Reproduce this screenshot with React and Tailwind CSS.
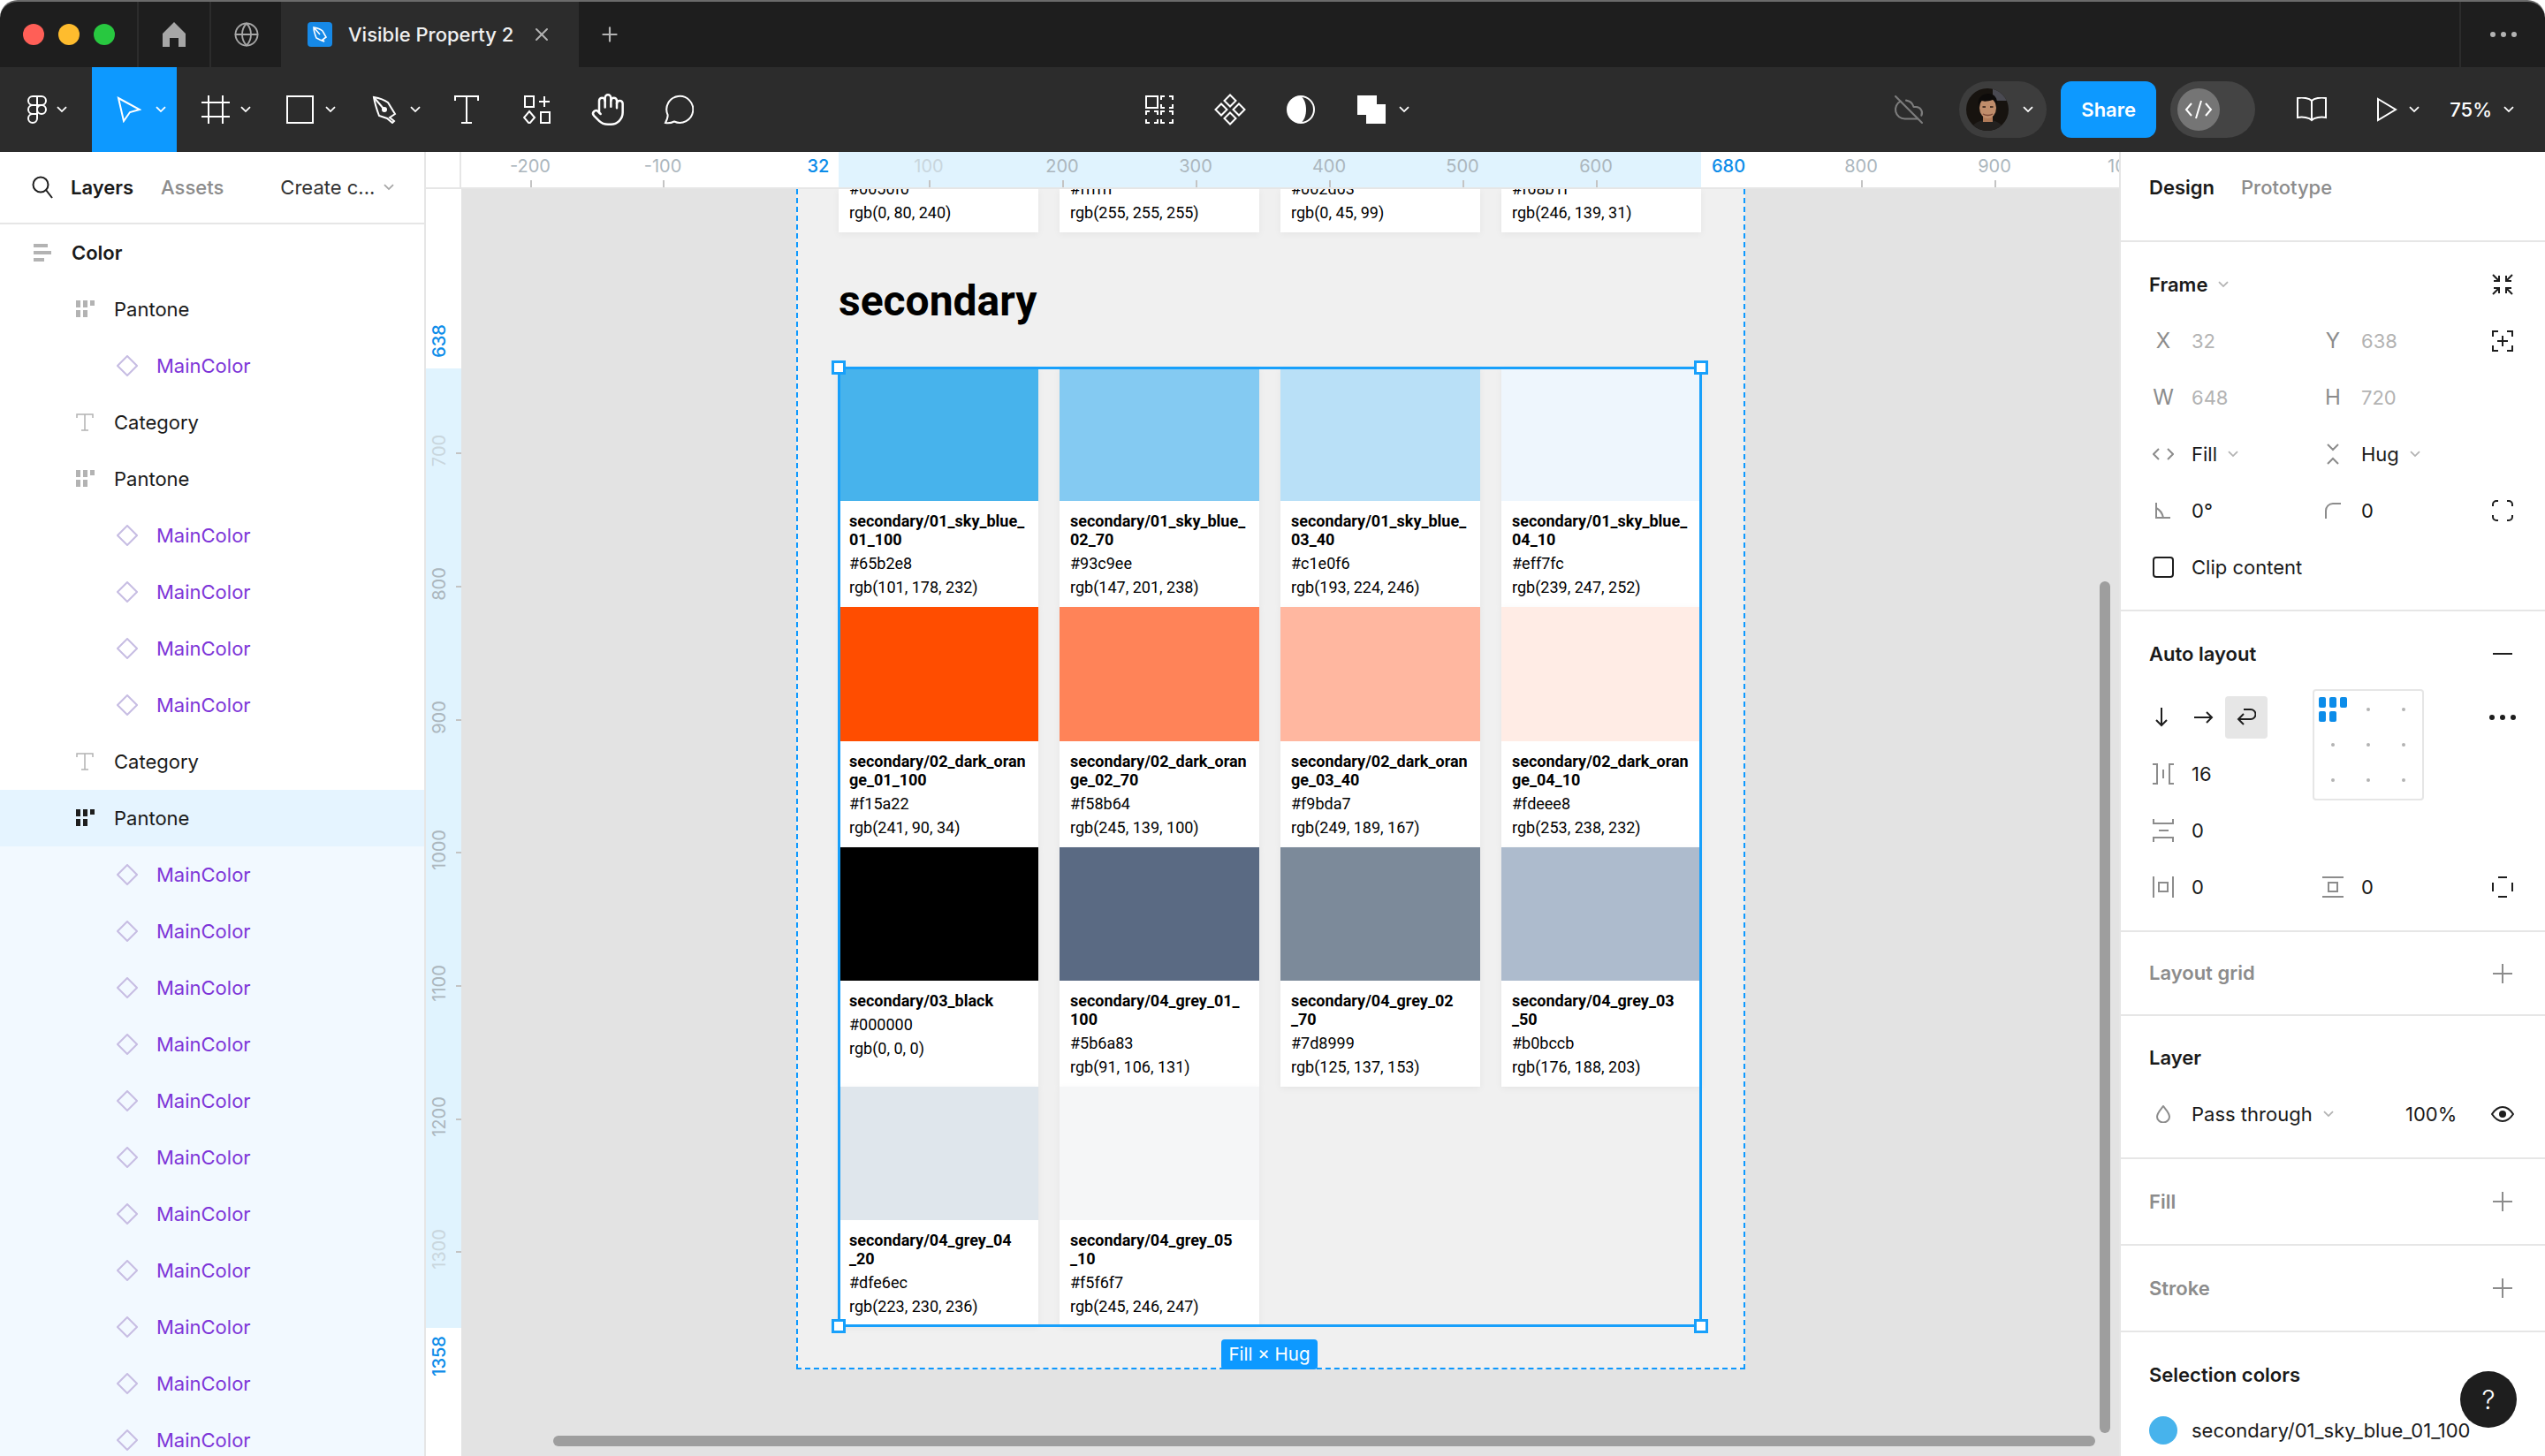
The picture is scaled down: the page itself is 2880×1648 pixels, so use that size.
import React from "react";
import { X, Plus, Globe, Hand, CloudOff } from "lucide-react";

const Chev = ({ c = "#ffffff", w = 12 }) => (
  <svg width={w} height={w * 0.6} viewBox="0 0 12 7" fill="none" stroke={c} strokeWidth="1.8"><path d="M1 1l5 5 5-5" /></svg>
);
const S = ({ w, h, vb, children, ...r }) => (
  <svg width={w} height={h} viewBox={vb || `0 0 ${w} ${h}`} fill="none" stroke="currentColor" strokeWidth="2" {...r}>{children}</svg>
);

const FigmaIcon = () => (
  <S w={24} h={32} className="text-white">
    <path d="M12 1H7a5 5 0 0 0 0 10h5zM12 1h5a5 5 0 0 1 0 10h-5zM12 11H7a5 5 0 0 0 0 10h5zM7 21h5v5a5 5 0 1 1-5-5z" />
    <circle cx="17" cy="16" r="5" />
  </S>
);
const MoveIcon = () => <S w={28} h={30} className="text-white"><path d="M2 2L26 15 15 18 8 28z" /></S>;
const FrameIcon = () => <S w={32} h={32} className="text-white"><path d="M8 0v32M24 0v32M0 8h32M0 24h32" /></S>;
const RectIcon = () => <S w={32} h={32} className="text-white"><rect x="1" y="1" width="29" height="30" /></S>;
const PenIcon = () => (
  <S w={30} h={32} className="text-white">
    <path d="M2 2C8 3 14 5 18 8L26 21 20 25 25 29 23 31 17 26 8 23C5 15 3 8 2 2z" />
    <path d="M2 2L13 15" /><circle cx="14" cy="16" r="2" fill="currentColor" />
  </S>
);
const TextIcon = () => <S w={28} h={32} className="text-white"><path d="M1 6V1h26v5M14 1v30M8 31h12" /></S>;
const ResIcon = () => (
  <S w={32} h={32} className="text-white">
    <rect x="2" y="1" width="10" height="12" /><path d="M24 1v12M18 7h12" /><path d="M7 18l6 7-6 7-6-7z" /><rect x="20" y="19" width="10" height="12" />
  </S>
);
const CommentIcon = () => <S w={34} h={34} className="text-white"><path d="M2 32C4 28 5 26 4.6 23A15 15 0 1 1 12 30.5C9 32 5 32.5 2 32z" /></S>;
const DashSquare = ({ x, y }) => (
  <path d={`M${x} ${y + 4}V${y}h4M${x + 9} ${y}h4v4M${x} ${y + 9}v4h4M${x + 9} ${y + 13}h4v-4`} />
);
const CompIcon = () => (
  <S w={32} h={32} className="text-white">
    <rect x="1" y="1" width="13" height="13" />
    <DashSquare x={18} y={1} />
    <DashSquare x={1} y={18} />
    <DashSquare x={18} y={18} />
  </S>
);
const DiamondsIcon = () => (
  <S w={36} h={36} className="text-white">
    <path d="M18 1.5l6.5 6.5-6.5 6.5-6.5-6.5zM18 21.5l6.5 6.5-6.5 6.5-6.5-6.5zM8 11.5l6.5 6.5-6.5 6.5L1.5 18zM28 11.5l6.5 6.5-6.5 6.5-6.5-6.5z" />
  </S>
);
const MaskIcon = () => (
  <S w={32} h={32} className="text-white">
    <ellipse cx="16" cy="16" rx="15" ry="15" />
    <path d="M16 1A15 15 0 0 0 16 31C24 26 24 6 16 1z" fill="currentColor" stroke="none" />
  </S>
);
const BoolIcon = () => <svg width="32" height="32" viewBox="0 0 32 32" fill="#fff"><path d="M0 0h22v10h10v22H10V22H0z" /></svg>;
const BookIcon = () => <S w={34} h={28} className="text-white"><path d="M17 4C14 1 7 0 1 1V23C7 22 14 23 17 26 20 23 27 22 33 23V1C27 0 20 1 17 4zM17 4V26" /></S>;
const PlayIcon = () => <S w={24} h={28} className="text-white"><path d="M2 2L22 14 2 26z" /></S>;

const Avatar = () => (
  <svg width="48" height="48" viewBox="0 0 48 48">
    <defs><clipPath id="av"><circle cx="24" cy="24" r="24" /></clipPath></defs>
    <g clipPath="url(#av)">
      <rect width="48" height="48" fill="#17130f" />
      <rect x="30" y="0" width="18" height="14" fill="#4a4a52" />
      <path d="M6 48c1-9 8-12 18-12s17 3 18 12z" fill="#23211f" />
      <rect x="19" y="28" width="11" height="10" fill="#b07a58" />
      <ellipse cx="24.5" cy="22" rx="9.5" ry="12" fill="#c08d6b" />
      <path d="M14 20c-2-9 4-14 11-14s11 5 10 14c-2-4-3-6-5-7-5 2-11 2-13 1-1 2-2 4-3 6z" fill="#0d0b0a" />
      <path d="M19 29c3 2 8 2 11 0" stroke="#7d4a38" strokeWidth="1.4" fill="none" />
      <path d="M18.5 21h3.5M27 21h3.5" stroke="#2a1a12" strokeWidth="1.6" />
    </g>
  </svg>
);

const Slot = ({ icon, active }) => (
  <div className={`relative flex h-full w-[96px] items-center pl-[25px] ${active ? "bg-[#0d99ff]" : ""}`}>
    <div className="flex w-[38px] justify-center">{icon}</div>
    <div className="absolute left-[72px] flex"><Chev /></div>
  </div>
);
const Tool = ({ icon }) => <div className="flex h-full w-[80px] items-center justify-center">{icon}</div>;

const Dots = ({ c }) => (
  <div className="flex gap-[6px]">
    {[0, 1, 2].map((i) => <span key={i} className={`h-[6px] w-[6px] rounded-full ${c}`} />)}
  </div>
);

function TabBar() {
  return (
    <div className="flex h-[76px] rounded-t-[20px] border-t-2 border-[#6b6b6b] bg-[#1e1e1e] text-[#b3b3b3]">
      <div className="flex w-[157px] items-center gap-[16px] border-r-2 border-[#2c2c2c] pl-[26px]">
        <span className="h-[24px] w-[24px] rounded-full bg-[#ff5f57]" />
        <span className="h-[24px] w-[24px] rounded-full bg-[#febc2e]" />
        <span className="h-[24px] w-[24px] rounded-full bg-[#28c840]" />
      </div>
      <div className="flex w-[82px] items-center justify-center border-r-2 border-[#2c2c2c]">
        <svg width="26" height="28" viewBox="0 0 26 28" fill="#a6a6a6"><path d="M13 0L26 13V28H18V18H8V28H0V13z" /></svg>
      </div>
      <div className="flex w-[81px] items-center justify-center border-r-2 border-[#2c2c2c]">
        <Globe size={30} strokeWidth={1.5} color="#a6a6a6" />
      </div>
      <div className="flex w-[335px] items-center bg-[#2c2c2c] pl-[28px]">
        <div className="flex h-[28px] w-[28px] items-center justify-center rounded-[4px] bg-[#1689e7]">
          <svg width="18" height="20" viewBox="0 0 18 20" fill="none" stroke="#fff" strokeWidth="1.6"><path d="M2 2C7 3 10 4 12 6L16 13 12 16 14 18 9 16 5 14C3 9 2 5 2 2zM2 2L9 10" /></svg>
        </div>
        <span className="ml-[18px] text-[22px] leading-none font-medium text-[#f0f0f0]">Visible Property 2</span>
        <X size={24} strokeWidth={2} className="ml-[20px] text-[#b3b3b3]" />
      </div>
      <div className="flex w-[70px] items-center justify-center"><Plus size={26} strokeWidth={2} className="text-[#b3b3b3]" /></div>
      <div className="ml-auto flex w-[97px] items-center justify-center border-l-2 border-[#2c2c2c]"><Dots c="bg-[#b3b3b3]" /></div>
    </div>
  );
}

function ToolBar() {
  return (
    <div className="flex h-[96px] items-center bg-[#2c2c2c] text-white">
      <div className="relative flex h-full w-[104px] items-center pl-[30px]">
        <FigmaIcon />
        <div className="absolute left-[64px] flex"><Chev /></div>
      </div>
      <div className="relative flex h-full w-[96px] items-center bg-[#0d99ff] pl-[28px]">
        <MoveIcon />
        <div className="absolute left-[72px] flex"><Chev /></div>
      </div>
      <Slot icon={<FrameIcon />} />
      <Slot icon={<RectIcon />} />
      <Slot icon={<PenIcon />} />
      <Tool icon={<TextIcon />} />
      <Tool icon={<ResIcon />} />
      <Tool icon={<Hand size={40} strokeWidth={1.5} />} />
      <Tool icon={<CommentIcon />} />
      <div className="ml-[464px] flex h-full items-center">
        <Tool icon={<CompIcon />} />
        <Tool icon={<DiamondsIcon />} />
        <Tool icon={<MaskIcon />} />
        <Tool icon={<BoolIcon />} />
        <div className="-ml-[9px] flex"><Chev /></div>
      </div>
      <div className="ml-auto flex h-full items-center">
        <CloudOff size={36} strokeWidth={1.4} className="mr-[39px] text-[#7d7d7d]" />
        <div className="flex h-[64px] w-[99px] items-center rounded-full bg-[#3d3d3d] pl-[8px]">
          <Avatar />
          <div className="ml-[16px] flex"><Chev /></div>
        </div>
        <div className="ml-[16px] flex h-[64px] w-[108px] items-center justify-center rounded-[12px] bg-[#0d99ff] text-[22px] font-semibold">Share</div>
        <div className="ml-[16px] flex h-[64px] w-[96px] items-center rounded-full bg-[#444444] pl-[8px]">
          <div className="flex h-[48px] w-[48px] items-center justify-center rounded-full bg-[#757575]">
            <S w={32} h={24} className="text-white"><path d="M8 5L2 12l6 7M24 5l6 7-6 7M19 2l-6 20" /></S>
          </div>
        </div>
        <div className="ml-[47px]"><BookIcon /></div>
        <div className="ml-[56px]"><PlayIcon /></div>
        <div className="ml-[13px] flex"><Chev /></div>
        <span className="ml-[34px] text-[22px] font-medium">75%</span>
        <div className="ml-[13px] mr-[35px] flex"><Chev /></div>
      </div>
    </div>
  );
}

const BarsIcon = () => (
  <svg width="20" height="20" viewBox="0 0 20 20" fill="#b3b3b3"><rect x="0" y="0" width="16" height="4" /><rect x="0" y="8" width="20" height="4" /><rect x="0" y="16" width="12" height="4" /></svg>
);
const WrapIcon = ({ c = "#b3b3b3" }) => (
  <svg width="22" height="20" viewBox="0 0 22 20" fill={c}>
    <rect x="0" y="0" width="5" height="8" /><rect x="8" y="0" width="5" height="8" /><rect x="16" y="0" width="5" height="6" />
    <rect x="0" y="11" width="5" height="8" /><rect x="8" y="11" width="5" height="8" />
  </svg>
);
const TIcon = () => <S w={20} h={20} className="text-[#b3b3b3]" strokeWidth="1.5"><path d="M1 5V1h18v4M10 1v18M6 19h8" /></S>;
const DiaIcon = () => <S w={24} h={24} className="text-[#c7bde3]"><path d="M12 1l11 11-11 11L1 12z" /></S>;

const layers = [
  ["Color", 0, "bars"], ["Pantone", 1, "wrap"], ["MainColor", 2, "c"], ["Category", 1, "t"], ["Pantone", 1, "wrap"],
  ["MainColor", 2, "c"], ["MainColor", 2, "c"], ["MainColor", 2, "c"], ["MainColor", 2, "c"], ["Category", 1, "t"],
  ["Pantone", 1, "sel"],
  ...Array.from({ length: 11 }, () => ["MainColor", 2, "cs"]),
];

function LayerRow({ name, depth, kind }) {
  const bg = kind === "sel" ? "bg-[#e5f4ff]" : kind === "cs" ? "bg-[#f2f9ff]" : "";
  const pad = depth === 0 ? "pl-[38px]" : depth === 1 ? "pl-[86px]" : "pl-[132px]";
  const gap = depth === 2 ? "w-[45px]" : "w-[43px]";
  return (
    <div className={`flex h-[64px] shrink-0 items-center text-[22px] ${bg} ${pad}`}>
      <div className={`flex shrink-0 ${gap}`}>
        {kind === "bars" && <BarsIcon />}
        {kind === "wrap" && <WrapIcon />}
        {kind === "sel" && <WrapIcon c="#1e1e1e" />}
        {kind === "t" && <TIcon />}
        {(kind === "c" || kind === "cs") && <DiaIcon />}
      </div>
      <span className={depth === 2 ? "text-[#7e36d8]" : depth === 0 ? "font-semibold text-[#1a1a1a]" : "text-[#1a1a1a]"}>{name}</span>
    </div>
  );
}

function LeftPanel() {
  return (
    <div className="flex w-[482px] shrink-0 flex-col overflow-hidden border-r-2 border-[#e6e6e6] bg-white">
      <div className="flex h-[82px] shrink-0 items-center border-b-2 border-[#e6e6e6] pl-[36px]">
        <S w={24} h={26} className="text-[#1e1e1e]"><circle cx="10" cy="10" r="8.5" /><path d="M16 16l7 9" /></S>
        <span className="ml-[20px] text-[22px] font-semibold text-[#1a1a1a]">Layers</span>
        <span className="ml-[31px] text-[22px] font-medium text-[#8c8c8c]">Assets</span>
        <span className="ml-[64px] text-[22px] text-[#333333]">Create c...</span>
        <div className="ml-[10px] flex"><Chev c="#a6a6a6" /></div>
      </div>
      {layers.map((l, i) => <LayerRow key={i} name={l[0]} depth={l[1]} kind={l[2]} />)}
    </div>
  );
}

const hLabels = [
  ["-200", 78], ["-100", 228], ["100", 529, "#c9d6dd"], ["200", 680], ["300", 831], ["400", 982], ["500", 1133], ["600", 1284], ["800", 1584], ["900", 1735], ["1000", 1886],
];
const vLabels = [
  ["700", 296, "#c9d6dd"], ["800", 447], ["900", 598], ["1000", 748], ["1100", 899], ["1200", 1050], ["1300", 1200, "#c9d6dd"],
];

function HRuler() {
  return (
    <div className="relative h-[42px] flex-1 overflow-hidden border-b-2 border-[#e6e6e6] bg-white">
      <div className="absolute top-0 bottom-0 left-[427px] w-[976px] bg-[#e0f3fe]" />
      {hLabels.map(([t, x, c]) => (
        <React.Fragment key={t}>
          <span className="absolute top-[4px] -translate-x-1/2 text-[20px] leading-[24px]" style={{ left: x, color: c || "#abb6bd" }}>{t}</span>
          <span className="absolute bottom-0 h-[8px] w-[2px] bg-[#c4c4c4]" style={{ left: x }} />
        </React.Fragment>
      ))}
      <span className="absolute top-[4px] left-[404px] -translate-x-1/2 text-[20px] leading-[24px] font-medium text-[#0c8ce9]">32</span>
      <span className="absolute top-[4px] left-[1434px] -translate-x-1/2 text-[20px] leading-[24px] font-medium text-[#0c8ce9]">680</span>
    </div>
  );
}

function VRuler() {
  return (
    <div className="relative w-[40px] shrink-0 overflow-hidden bg-white">
      <div className="absolute top-[203px] left-0 h-[1086px] w-full bg-[#e0f3fe]" />
      {vLabels.map(([t, y, c]) => (
        <React.Fragment key={t}>
          <span className="absolute left-[15px] -translate-x-1/2 -translate-y-1/2 -rotate-90 text-[20px] leading-[24px]" style={{ top: y, color: c || "#abb6bd" }}>{t}</span>
          <span className="absolute right-0 h-[2px] w-[6px] bg-[#c4c4c4]" style={{ top: y + 2 }} />
        </React.Fragment>
      ))}
      <span className="absolute top-[172px] left-[15px] -translate-x-1/2 -translate-y-1/2 -rotate-90 text-[20px] leading-[24px] font-medium text-[#0c8ce9]">638</span>
      <span className="absolute top-[1321px] left-[15px] -translate-x-1/2 -translate-y-1/2 -rotate-90 text-[20px] leading-[24px] font-medium text-[#0c8ce9]">1358</span>
    </div>
  );
}

const cards = [
  ["#47b3ec", ["secondary/01_sky_blue_", "01_100"], "#65b2e8", "rgb(101, 178, 232)"],
  ["#84caf2", ["secondary/01_sky_blue_", "02_70"], "#93c9ee", "rgb(147, 201, 238)"],
  ["#b9e0f7", ["secondary/01_sky_blue_", "03_40"], "#c1e0f6", "rgb(193, 224, 246)"],
  ["#eef6fd", ["secondary/01_sky_blue_", "04_10"], "#eff7fc", "rgb(239, 247, 252)"],
  ["#ff4d00", ["secondary/02_dark_oran", "ge_01_100"], "#f15a22", "rgb(241, 90, 34)"],
  ["#ff8358", ["secondary/02_dark_oran", "ge_02_70"], "#f58b64", "rgb(245, 139, 100)"],
  ["#ffb7a0", ["secondary/02_dark_oran", "ge_03_40"], "#f9bda7", "rgb(249, 189, 167)"],
  ["#ffece5", ["secondary/02_dark_oran", "ge_04_10"], "#fdeee8", "rgb(253, 238, 232)"],
  ["#000000", ["secondary/03_black"], "#000000", "rgb(0, 0, 0)"],
  ["#5a6a83", ["secondary/04_grey_01_", "100"], "#5b6a83", "rgb(91, 106, 131)"],
  ["#7c8a9a", ["secondary/04_grey_02", "_70"], "#7d8999", "rgb(125, 137, 153)"],
  ["#adbbcd", ["secondary/04_grey_03", "_50"], "#b0bccb", "rgb(176, 188, 203)"],
  ["#dfe6ec", ["secondary/04_grey_04", "_20"], "#dfe6ec", "rgb(223, 230, 236)"],
  ["#f5f6f7", ["secondary/04_grey_05", "_10"], "#f5f6f7", "rgb(245, 246, 247)"],
];

function Card({ swatch, title, hex, rgb }) {
  return (
    <div className="w-[226px] bg-white shadow-[0_2px_8px_rgba(0,0,0,0.05)]">
      <div className="h-[151.3px]" style={{ backgroundColor: swatch }} />
      <div className="flex flex-col gap-[6px] p-[12px] text-[18px] leading-[21px] text-black">
        <div className="font-bold whitespace-nowrap">{title.map((t) => <div key={t}>{t}</div>)}</div>
        <div>{hex}</div>
        <div>{rgb}</div>
      </div>
    </div>
  );
}

const Handle = ({ pos }) => <span className={`absolute h-[16px] w-[16px] border-[3px] border-[#18a0fb] bg-white ${pos}`} />;

function Canvas() {
  const top = [["#0050f0", "rgb(0, 80, 240)"], ["#ffffff", "rgb(255, 255, 255)"], ["#002d63", "rgb(0, 45, 99)"], ["#f68b1f", "rgb(246, 139, 31)"]];
  return (
    <div className="relative flex-1 overflow-hidden bg-[#e3e3e3] [font-family:Roboto,sans-serif]">
      <div className="relative ml-[379px] h-[1336px] w-[1074px] border-x-2 border-b-2 border-dashed border-[#0d99ff] bg-[#f0f0f0] pl-[46px]">
        <div className="flex gap-x-[24px]">
          {top.map(([h, r]) => (
            <div key={h} className="flex h-[49px] w-[226px] flex-col justify-end gap-[6px] bg-white px-[12px] pb-[12px] text-[18px] leading-[21px] text-black shadow-[0_2px_8px_rgba(0,0,0,0.05)]">
              <div>{h}</div><div>{r}</div>
            </div>
          ))}
        </div>
        <div className="mt-[50px] mb-[47px] text-[48px] leading-[56px] font-bold text-black">secondary</div>
        <div className="relative w-[976px]">
          <div className="flex flex-wrap gap-x-[24px]">
            {cards.map((c) => <Card key={c[2]} swatch={c[0]} title={c[1]} hex={c[2]} rgb={c[3]} />)}
          </div>
          <div className="absolute -inset-[1px] border-[3px] border-[#18a0fb]" />
          <Handle pos="-top-[8px] -left-[8px]" />
          <Handle pos="-top-[8px] -right-[8px]" />
          <Handle pos="-bottom-[8px] -left-[8px]" />
          <Handle pos="-bottom-[8px] -right-[8px]" />
        </div>
        <div className="absolute -bottom-[2px] left-[479px] flex h-[34px] w-[109px] items-center justify-center rounded-[4px] bg-[#0d99ff] text-[20.5px] text-white [font-family:Inter,sans-serif]">Fill × Hug</div>
      </div>
      <div className="absolute top-[444px] left-[1854px] h-[964px] w-[12px] rounded-full bg-[#9e9e9e]" />
      <div className="absolute top-[1411px] left-[104px] h-[12px] w-[1745px] rounded-full bg-[#9e9e9e]" />
    </div>
  );
}

const Title = ({ children, muted, right }) => (
  <div className="flex h-[64px] items-center justify-between">
    <span className={`text-[22px] font-semibold ${muted ? "text-[#8c8c8c]" : "text-[#1a1a1a]"}`}>{children}</span>
    {right && <div className="flex w-[32px] justify-center">{right}</div>}
  </div>
);
const Cell = ({ icon, children, w = "w-[192px]" }) => (
  <div className={`flex shrink-0 items-center ${w}`}>
    <div className="flex w-[32px] shrink-0 justify-center text-[#8c8c8c]">{icon}</div>
    <div className="ml-[16px] flex items-center gap-[12px] text-[22px] whitespace-nowrap text-[#1a1a1a]">{children}</div>
  </div>
);
const RIcon = ({ children }) => <div className="flex w-[32px] justify-center text-[#1e1e1e]">{children}</div>;
const Row = ({ children }) => <div className="flex h-[64px] items-center">{children}</div>;
const L = ({ children }) => <span className="text-[24px] leading-none">{children}</span>;
const G = ({ children }) => <span className="text-[#b3b3b3]">{children}</span>;
const PlusI = () => <S w={22} h={22} className="text-[#8c8c8c]"><path d="M11 0v22M0 11h22" /></S>;

function RightPanel() {
  return (
    <div className="relative flex w-[482px] shrink-0 flex-col overflow-hidden border-l-2 border-[#e6e6e6] bg-white">
      <div className="flex h-[102px] shrink-0 items-center gap-[30px] border-b-2 border-[#e6e6e6] px-[32px] pb-[20px]">
        <span className="text-[22px] font-semibold text-[#1a1a1a]">Design</span>
        <span className="text-[22px] font-medium text-[#8c8c8c]">Prototype</span>
      </div>

      <div className="h-[418px] shrink-0 border-b-2 border-[#e6e6e6] px-[32px] pt-[16px]">
        <div className="flex h-[64px] items-center">
          <span className="text-[22px] font-semibold text-[#1a1a1a]">Frame</span>
          <div className="ml-[12px] flex"><Chev c="#b3b3b3" /></div>
          <div className="ml-auto">
            <RIcon><S w={26} h={26}><path d="M2 2l6 6M9 3v6H3M24 2l-6 6M17 3v6h6M2 24l6-6M3 17h6v6M24 24l-6-6M23 17h-6v6" /></S></RIcon>
          </div>
        </div>
        <Row>
          <Cell icon={<L>X</L>}><G>32</G></Cell>
          <Cell icon={<L>Y</L>}><G>638</G></Cell>
          <RIcon><S w={24} h={24}><path d="M1 7V1h6M17 1h6v6M1 17v6h6M17 23h6v-6M12 6v12M6 12h12" /></S></RIcon>
        </Row>
        <Row>
          <Cell icon={<L>W</L>}><G>648</G></Cell>
          <Cell icon={<L>H</L>}><G>720</G></Cell>
        </Row>
        <Row>
          <Cell icon={<S w={24} h={14}><path d="M7 1L1 7l6 6M17 1l6 6-6 6" /></S>}>Fill <Chev c="#b3b3b3" /></Cell>
          <Cell icon={<S w={14} h={24}><path d="M1 1l6 6 6-6M1 23l6-6 6 6" /></S>}>Hug <Chev c="#b3b3b3" /></Cell>
        </Row>
        <Row>
          <Cell icon={<S w={18} h={18}><path d="M1 0v17h16M1 6c4 2 7 6 8 11" /></S>}>0°</Cell>
          <Cell icon={<S w={18} h={18}><path d="M1 18V9a8 8 0 0 1 8-8h9" /></S>}>0</Cell>
          <RIcon><S w={24} h={24}><path d="M1 7V5a4 4 0 0 1 4-4h2M17 1h2a4 4 0 0 1 4 4v2M1 17v2a4 4 0 0 0 4 4h2M17 23h2a4 4 0 0 0 4-4v-2" /></S></RIcon>
        </Row>
        <Row>
          <Cell icon={<span className="h-[24px] w-[24px] rounded-[4px] border-2 border-[#1e1e1e]" />}>Clip content</Cell>
        </Row>
      </div>

      <div className="relative h-[363px] shrink-0 border-b-2 border-[#e6e6e6] px-[32px] pt-[16px]">
        <Title right={<S w={22} h={2} className="text-[#1e1e1e]"><path d="M0 1h22" /></S>}>Auto layout</Title>
        <div className="mt-[8px] flex h-[64px] items-center">
          <div className="-ml-[10px] flex h-[48px] w-[48px] items-center justify-center text-[#1e1e1e]"><S w={14} h={22}><path d="M7 0v20M1 14l6 6 6-6" /></S></div>
          <div className="flex h-[48px] w-[48px] items-center justify-center text-[#1e1e1e]"><S w={22} h={14}><path d="M0 7h20M14 1l6 6-6 6" /></S></div>
          <div className="flex h-[48px] w-[48px] items-center justify-center rounded-[4px] bg-[#e6e6e6] text-[#1e1e1e]"><S w={22} h={20}><path d="M8 6l-6 6 6 6M2 12h14a5 5 0 0 0 0-11H8" /></S></div>
          <div className="ml-auto flex w-[32px] justify-center"><Dots c="bg-[#1e1e1e]" /></div>
        </div>
        <Row><Cell icon={<S w={26} h={24}><path d="M1 1h5v22H1M25 1h-5v22h5M13 7v10" /></S>}>16</Cell></Row>
        <Row><Cell icon={<S w={24} h={26}><path d="M1 0v5h22V0M1 26v-5h22v5M7 13h11" /></S>}>0</Cell></Row>
        <Row>
          <Cell icon={<S w={24} h={24}><path d="M1 0v24M23 0v24" /><rect x="7" y="7" width="10" height="10" /></S>}>0</Cell>
          <Cell icon={<S w={24} h={24}><path d="M0 1h24M0 23h24" /><rect x="7" y="7" width="10" height="10" /></S>}>0</Cell>
          <RIcon><S w={24} h={24}><path d="M7 1h10M7 23h10M1 7v10M23 7v10" /></S></RIcon>
        </Row>
        <div className="absolute top-[88px] left-[217px]">
          <svg width="126" height="126" viewBox="0 0 126 126">
            <rect x="1" y="1" width="124" height="124" rx="3" fill="#fff" stroke="#e6e6e6" strokeWidth="2" />
            {[[63, 23], [103, 23], [23, 63], [63, 63], [103, 63], [23, 103], [63, 103], [103, 103]].map(([x, y]) => <circle key={`${x}-${y}`} cx={x} cy={y} r="2" fill="#b3b3b3" />)}
            {[[7, 9], [19, 9], [31, 9], [7, 25], [19, 25]].map(([x, y]) => <rect key={`${x}-${y}`} x={x} y={y} width="8" height="12" rx="2" fill="#0c8ce9" />)}
          </svg>
        </div>
      </div>

      <div className="flex h-[95px] shrink-0 flex-col justify-center border-b-2 border-[#e6e6e6] px-[32px]">
        <Title muted right={<PlusI />}>Layout grid</Title>
      </div>

      <div className="h-[162px] shrink-0 border-b-2 border-[#e6e6e6] px-[32px] pt-[15px]">
        <Title>Layer</Title>
        <div className="flex h-[64px] items-center">
          <Cell w="w-[290px]" icon={<S w={16} h={20}><path d="M8 1C12 6 15 9 15 13A7 6.5 0 0 1 1 13C1 9 4 6 8 1z" /></S>}>Pass through <Chev c="#b3b3b3" /></Cell>
          <span className="text-[22px] text-[#1a1a1a]">100%</span>
          <div className="ml-auto text-[#1e1e1e]">
            <RIcon><S w={26} h={18}><path d="M1 9C5 3 9 1 13 1s8 2 12 8c-4 6-8 8-12 8S5 15 1 9z" /><circle cx="13" cy="9" r="4" fill="currentColor" stroke="none" /></S></RIcon>
          </div>
        </div>
      </div>

      <div className="flex h-[98px] shrink-0 items-center border-b-2 border-[#e6e6e6] px-[32px]"><div className="w-full"><Title muted right={<PlusI />}>Fill</Title></div></div>
      <div className="flex h-[98px] shrink-0 items-center border-b-2 border-[#e6e6e6] px-[32px]"><div className="w-full"><Title muted right={<PlusI />}>Stroke</Title></div></div>

      <div className="shrink-0 px-[32px] pt-[16px]">
        <Title>Selection colors</Title>
        <div className="-mt-[1px] flex h-[64px] items-center">
          <span className="h-[32px] w-[32px] shrink-0 rounded-full bg-[#47b3ec]" />
          <span className="ml-[16px] text-[22px] whitespace-nowrap text-[#1a1a1a]">secondary/01_sky_blue_01_100</span>
        </div>
      </div>

      <div className="absolute top-[1380px] left-[384px] flex h-[64px] w-[64px] items-center justify-center rounded-full bg-[#1e1e1e] text-[30px] font-light text-white">?</div>
    </div>
  );
}

export default function App() {
  return (
    <div className="flex h-[1648px] w-[2880px] flex-col overflow-hidden bg-white [font-family:Inter,sans-serif]">
      <TabBar />
      <ToolBar />
      <div className="flex min-h-0 flex-1">
        <LeftPanel />
        <div className="flex min-w-0 flex-1 flex-col">
          <div className="flex h-[42px] shrink-0">
            <div className="h-full w-[40px] shrink-0 border-r-2 border-b-2 border-[#e6e6e6] bg-white" />
            <HRuler />
          </div>
          <div className="flex min-h-0 flex-1">
            <VRuler />
            <Canvas />
          </div>
        </div>
        <RightPanel />
      </div>
    </div>
  );
}
